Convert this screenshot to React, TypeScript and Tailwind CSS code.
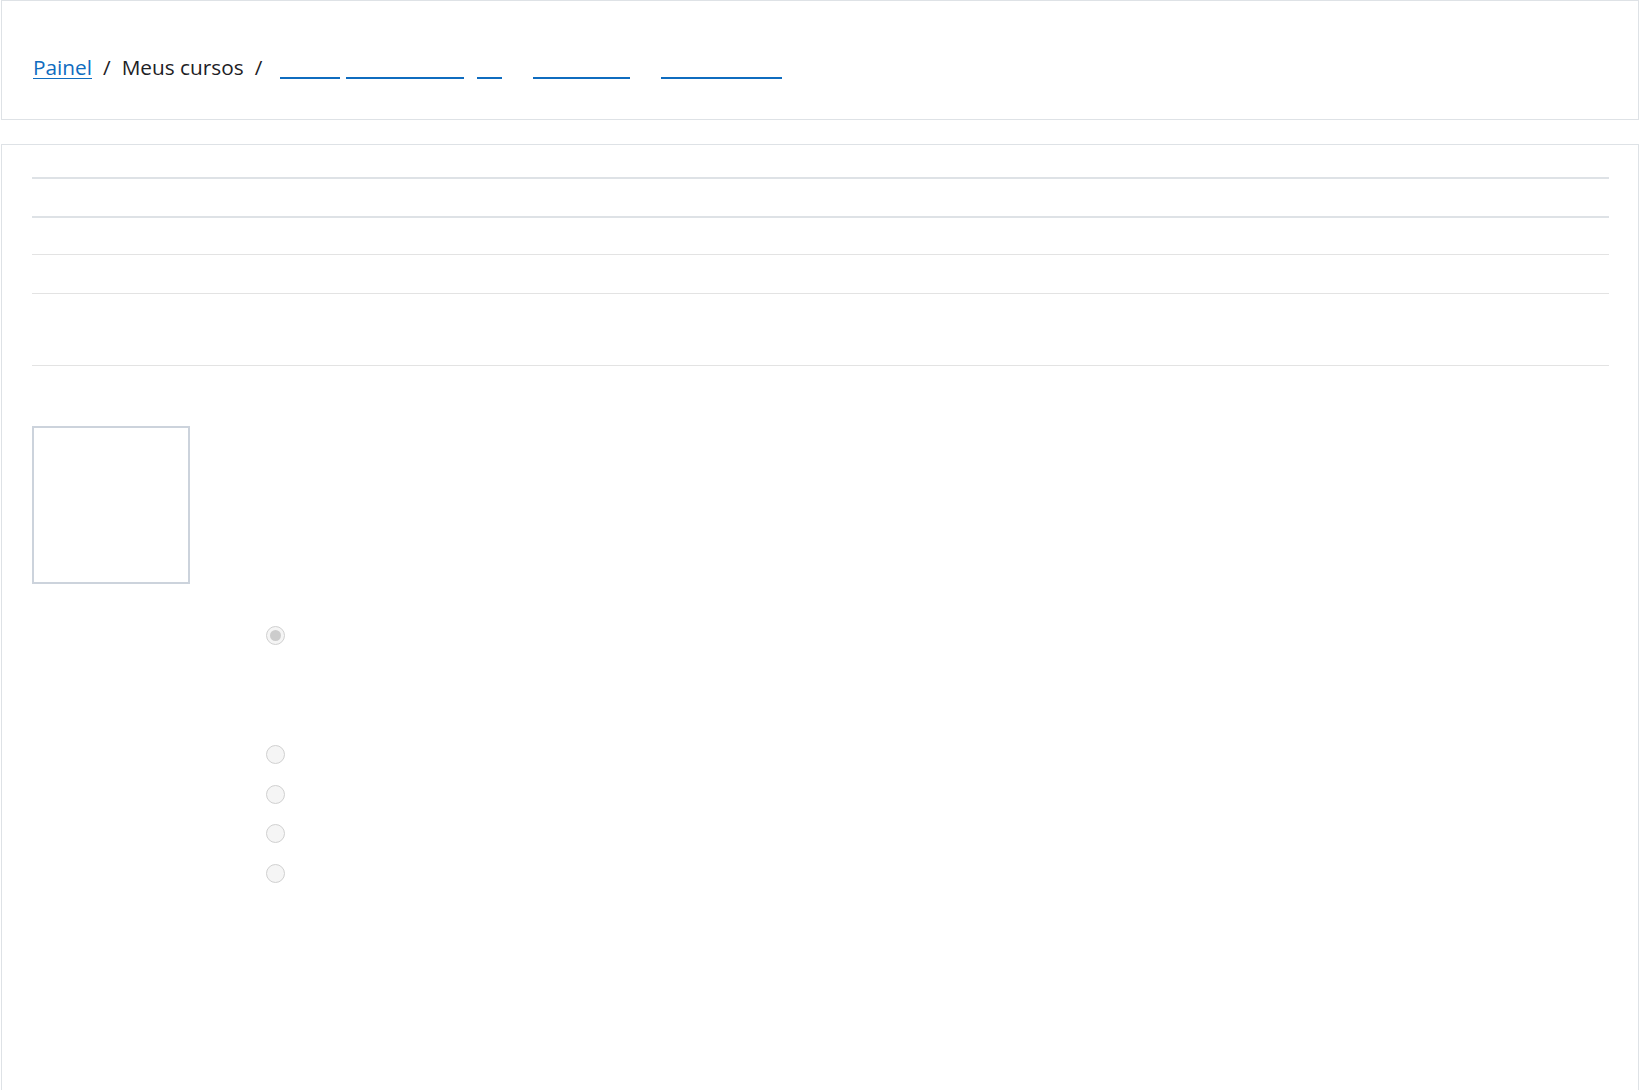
export default function App() {
  return (
    <div className="min-h-screen bg-white px-px font-['Open_Sans','Noto_Sans',sans-serif] text-[#1d2125]">
      <header className="h-[120px] border border-[#dee2e6] bg-white">
        <nav className="flex items-baseline pl-[31px] pt-[51px] text-[20.8px] leading-[30px]">
          <a href="#" className="text-[#0f6cbf] underline decoration-1 underline-offset-[3px]">Painel</a>
          <span className="px-[11px]">/</span>
          <span>Meus cursos</span>
          <span className="px-[11px]">/</span>
          <LinkBar className="ml-[7px] w-[60px]" />
          <LinkBar className="ml-[6px] w-[118px]" />
          <LinkBar className="ml-[13px] w-[25px]" />
          <LinkBar className="ml-[31px] w-[97px]" />
          <LinkBar className="ml-[31px] w-[121px]" />
        </nav>
      </header>

      <main className="mt-[24px] min-h-[1000px] border border-[#dee2e6] bg-white pl-[30px] pr-[29px] pt-[32px]">
        <div className="h-[39px] border-t-2 border-[#dee2e6]" />
        <div className="h-[38px] border-t-2 border-[#dee2e6]" />
        <div className="h-[39px] border-t border-[#e3e3e3]" />
        <div className="h-[72px] border-t border-[#e3e3e3]" />
        <div className="border-t border-[#e3e3e3]" />

        <div className="mt-[60px] h-[158px] w-[158px] border-2 border-[#ccd3dc]" />

        <div className="ml-[234px] mt-[42px] flex flex-col">
          <Radio checked />
          <div className="mt-[100px]">
            <Radio />
          </div>
          <div className="mt-[21px]">
            <Radio />
          </div>
          <div className="mt-[20px]">
            <Radio />
          </div>
          <div className="mt-[21px]">
            <Radio />
          </div>
        </div>
      </main>
    </div>
  )
}

function LinkBar({ className }: { className: string }) {
  return <a href="#" className={`inline-block h-[2px] translate-y-[4px] bg-[#0f6cbf] ${className}`} />
}

function Radio({ checked = false }: { checked?: boolean }) {
  return (
    <span className="flex h-[19px] w-[19px] items-center justify-center rounded-full border-[1.5px] border-[#d0d0d0] bg-[#f5f5f5]">
      {checked && <span className="h-[11px] w-[11px] rounded-full bg-[#cccccc]" />}
    </span>
  )
}
